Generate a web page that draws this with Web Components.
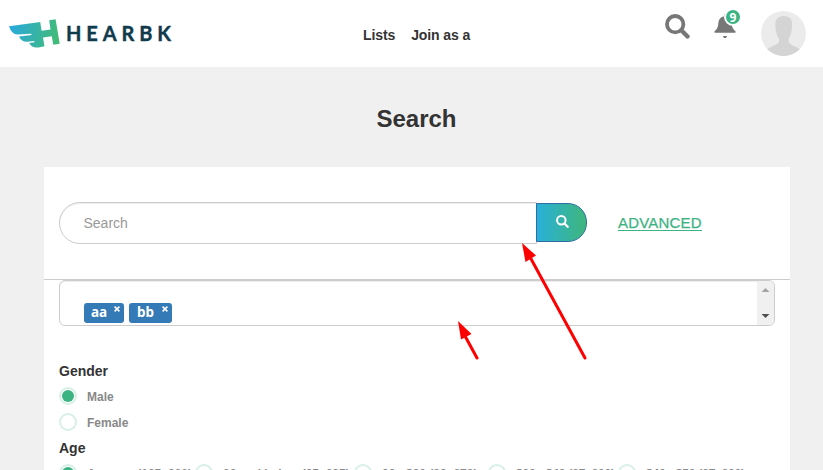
<!DOCTYPE html>
<html lang="en"><head><meta charset="utf-8"><title>Search</title>
<style>
html,body{margin:0;height:470px;overflow:hidden;background:#f0f0f0;font-family:"Liberation Sans",Arial,sans-serif;color:#333}
body{position:relative}
</style></head><body>
<site-header></site-header>
<search-page></search-page>
<pointer-arrows></pointer-arrows>
<script>
function define(name, html){
  customElements.define(name, class extends HTMLElement{
    constructor(){
      super();
      const t=document.createElement('template');
      t.innerHTML=html;
      this.attachShadow({mode:'open'}).append(t.content.cloneNode(true));
    }
  });
}
define('brand-logo', `<style>:host{display:block;width:180px;height:67px}svg{display:block}</style>
<svg width="180" height="67" viewBox="0 0 180 67"><defs><linearGradient id="g" gradientUnits="userSpaceOnUse" x1="9" y1="28" x2="60" y2="40"><stop offset="0" stop-color="#29a9df"/><stop offset="1" stop-color="#43bc72"/></linearGradient></defs>
<path fill="url(#g)" d="M9 26.3 L40.2 22 L41.6 30.8 L50.5 29.5 L49.2 20.2 L55.6 19.2 L59.7 43.8 L53.3 44.8 L51.8 36.2 L43 37.5 L44.5 46.2 L38.6 47.4 Q32 48.6 29.2 43 L34.5 42.2 L34.3 41 L27.5 41.8 Q21.6 42.2 19 36.4 L31.5 34.9 L31.3 33.8 L17.5 34.5 Q11.5 34.5 9 26.3Z"/>
<text x="66" y="40.7" font-family="Lato,sans-serif" font-size="20" font-weight="700" fill="#103b4c" stroke="#103b4c" stroke-width=".4" textLength="105" lengthAdjust="spacing">HEARBK</text></svg>`);
define('search-icon', `<style>:host{display:block;width:var(--s,25px);height:var(--s,25px)}svg{display:block;width:100%;height:100%}</style>
<svg viewBox="0 0 25 25" fill="none" stroke="currentColor"><circle cx="10.2" cy="10.2" r="8.2" stroke-width="3.8"/><path d="M16.3 16.3L22.5 22.5" stroke-width="4.4" stroke-linecap="round"/></svg>`);
define('notification-bell', `<style>:host{display:block;position:relative;width:22px;height:25px}svg{display:block}
span{position:absolute;left:10px;top:-6px;width:14px;height:14px;border:2px solid #fff;border-radius:50%;background:#3bb482;color:#fff;font:700 12px/15px "Noto Sans",sans-serif;text-align:center}</style>
<svg width="22" height="25" viewBox="0 0 22 25" fill="#777"><path d="M10 0h2v2.2C16 3 17.5 6 17.7 10 18 14 19.5 15.5 21.5 17.2V18.7H.5V17.2C2.5 15.5 4 14 4.3 10 4.5 6 6 3 10 2.2ZM8.8 22H13.2L12 24.1H10Z"/></svg><span>9</span>`);
define('user-avatar', `<style>:host{display:block;width:45px;height:45px}svg{display:block}</style>
<svg width="45" height="45" viewBox="0 0 45 45"><defs><clipPath id="c"><circle cx="22.5" cy="22.5" r="22.5"/></clipPath></defs><g clip-path="url(#c)"><path fill="#ebebeb" d="M0 0H45V45H0Z"/><path fill="#d4d4d4" d="M14.5 11Q15.5 5 22.8 5T31 11Q31.6 16 30.3 21 29.8 25 27.6 27.5V31Q28 33.2 33 35 38 36.8 39.5 39V45H5.5V39Q7 36.8 12 35 17 33.2 18 31V27.5Q15.7 25 15.2 21 13.9 16 14.5 11Z"/></g></svg>`);
define('site-header', `<style>:host{display:flex;height:67px;background:#fff;align-items:flex-start}
nav{display:flex;gap:16px;padding:27px 0 0 183px;width:302px;font:700 14px/16px "Liberation Sans",sans-serif;color:#333;white-space:nowrap;letter-spacing:-.1px}
search-icon{color:#777;margin-top:14px}notification-bell{margin:14px 0 0 24px}user-avatar{margin:11px 0 0 25px}</style>
<brand-logo></brand-logo><nav><span>Lists</span><span>Join as a</span></nav><search-icon></search-icon><notification-bell></notification-bell><user-avatar></user-avatar>`);
define('tag-chip', `<style>:host{display:flex;height:20px;box-sizing:border-box;padding:0 4px 0 7px;justify-content:space-between;background:#337ab7;border-radius:3px;color:#fff;font:700 13.5px/18px "Noto Sans",sans-serif}
svg{margin-top:3px}</style><slot></slot><svg width="6" height="6" viewBox="0 0 6 6" fill="none" stroke="#fff" stroke-width="1.6"><path d="M.6.6L5.4 5.4M5.4.6L.6 5.4"/></svg>`);
define('radio-option', `<style>:host{display:flex;height:18px;gap:10px;font:700 12px/20px "Liberation Sans",sans-serif;color:#888;white-space:nowrap}
i{box-sizing:border-box;flex:none;width:18px;height:18px;border:2px solid #d8f0e5;border-radius:50%;padding:1px}
:host([checked]) i::before{content:"";display:block;width:12px;height:12px;border-radius:50%;background:#3bb482}</style><i></i><span><slot></slot></span>`);
define('search-bar', `<style>:host{display:flex;height:42px;padding:35px 0 35px 15px}
.in{box-sizing:border-box;width:478px;height:42px;border:1px solid #ccc;border-radius:21px 0 0 21px;padding-left:23.5px;font:14px/40px "Liberation Sans",sans-serif;color:#999;box-shadow:inset 0 1px 1px rgba(0,0,0,.075)}
.btn{box-sizing:border-box;width:51px;height:39px;margin:1px 0 0 -1px;border:1px solid #2e6da4;border-radius:0 19px 19px 0;background:linear-gradient(90deg,#29b0d9,#3fb67b);padding:11px 0 0 19px;color:#fff;--s:13px}
a{margin:12px 0 0 31px;height:16px;font-size:15px;line-height:18px;letter-spacing:.2px;color:#3bb482;-webkit-text-stroke:.25px #3bb482;border-bottom:1px solid #3bb482}</style>
<div class="in">Search</div><div class="btn"><search-icon></search-icon></div><a>ADVANCED</a>`);
define('tag-box', `<style>:host{display:flex;box-sizing:border-box;width:716px;height:46px;margin-left:15px;border:1px solid #ccc;border-radius:6px;box-shadow:inset 0 1px 1px rgba(0,0,0,.075);overflow:hidden}
.tags{flex:1;display:flex;gap:5px;padding:22px 0 0 24px}
.bar{width:17px;background:#f0f0f0}svg{display:block}</style><div class="tags"><slot></slot></div><div class="bar"><svg width="17" height="44"><path fill="#a3a3a3" d="M4.5 11H12.5L8.5 7Z"/><path fill="#505050" d="M4.5 33H12.5L8.5 37Z"/></svg></div>`);
define('filter-group', `<style>:host{display:block;margin-left:15px}h2{margin:0;font-size:14px;line-height:16px;font-weight:700;color:#333}
div{display:flex;flex-direction:column;gap:8px;padding-top:8px}:host([row]) div{flex-direction:row;gap:0}</style><h2><slot name="title"></slot></h2><div><slot></slot></div>`);
define('search-page', `<style>:host{display:block}
h1{margin:0;padding:37px 0 33px 10px;font-size:24px;line-height:30px;text-align:center}
main{box-sizing:border-box;width:746px;height:303px;margin-left:44px;background:#fff;overflow:hidden}
hr{margin:0;border:0;height:1px;background:#ccc}
.g{margin-top:37px}.a{margin-top:9px}
.a radio-option{box-sizing:border-box;flex:none}</style>
<h1>Search</h1><main><search-bar></search-bar><hr><tag-box><tag-chip style="width:40px">aa</tag-chip><tag-chip style="width:43px;padding-left:8px">bb</tag-chip></tag-box>
<filter-group class="g"><span slot="title">Gender</span><radio-option checked>Male</radio-option><radio-option>Female</radio-option></filter-group>
<filter-group class="a" row><span slot="title">Age</span><radio-option checked style="width:136px">Average (185, 360)</radio-option><radio-option style="width:159px">20 and below (35, 685)</radio-option><radio-option style="width:134px">20 - $30 (39, 670)</radio-option><radio-option style="width:130px;letter-spacing:-.17px">$30 - $40 (37, 600)</radio-option><radio-option style="letter-spacing:-.17px">$40 - $50 (37, 600)</radio-option></filter-group></main>`);
define('pointer-arrows', `<style>:host{position:absolute;inset:0;pointer-events:none}svg{display:block}</style>
<svg width="823" height="470" fill="#f00" stroke="#f00"><g stroke-width="3" stroke-linecap="round"><path d="M530 257L585 358M465 336L477 358"/></g><path stroke="none" d="M522 243L536 255.5 525.5 262ZM458 321L471.5 334 461 339.5Z"/></svg>`);
</script></body></html>
